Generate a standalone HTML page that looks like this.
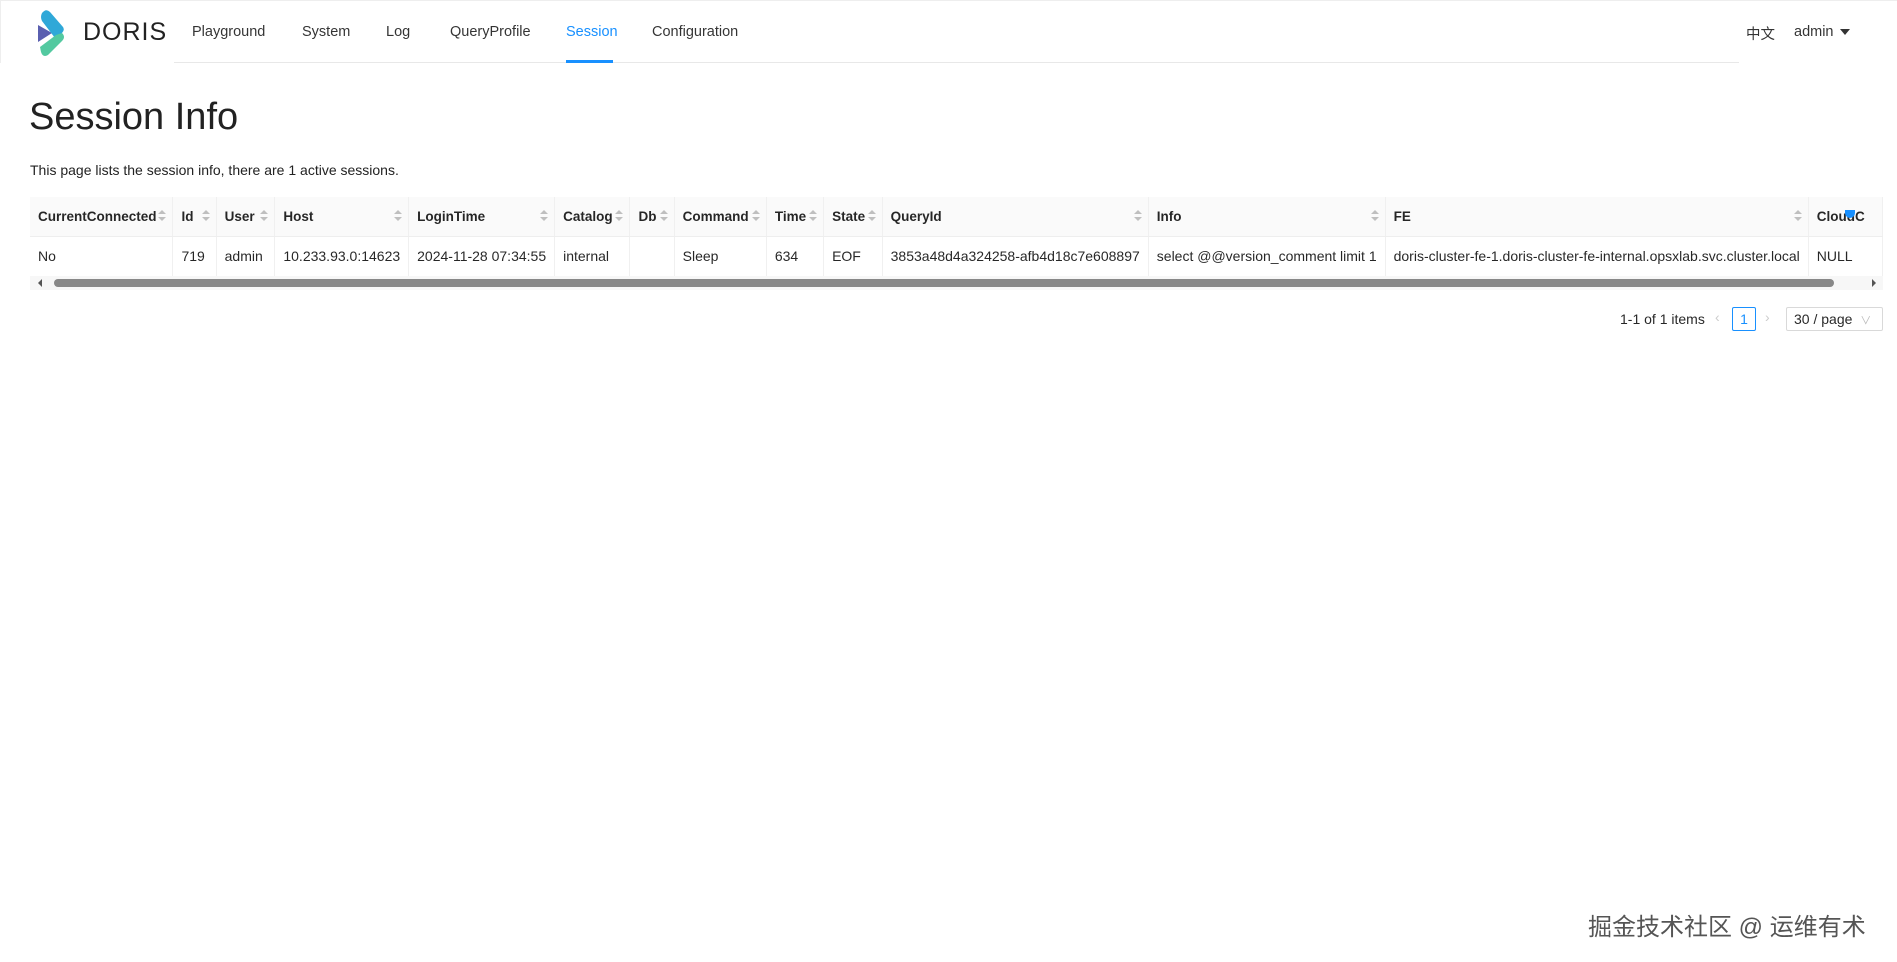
<!DOCTYPE html>
<html><head><meta charset="utf-8"><style>
*{box-sizing:border-box;margin:0;padding:0}
body{width:1897px;height:962px;background:#fff;font-family:"Liberation Sans","Noto Sans CJK SC",sans-serif;color:rgba(0,0,0,.85);position:relative;overflow:hidden;font-size:14px}
.nav{position:absolute;left:0;top:0;width:1897px;height:63px;border-top:1px solid #eee;border-left:1px solid #eee}
.nav .line{position:absolute;left:173px;top:61px;width:1565px;height:1px;background:#e8e8e8}
.nav a{position:absolute;top:23px;font-size:14.5px;color:rgba(0,0,0,.8)}
.t{position:absolute;white-space:nowrap}
table{position:absolute;left:30px;top:197px;border-collapse:collapse;table-layout:fixed}
td,th{border-right:1px solid #f0f0f0;border-bottom:1px solid #eee;padding:0 8px;text-align:left;font-size:14px;white-space:nowrap;overflow:hidden}
th{background:#fafafa;height:39px;font-weight:bold;position:relative;color:rgba(0,0,0,.85);font-size:13.5px}
td{height:40px}
.s{position:absolute;right:6px;top:13px;width:8px;height:13px}
.s:before{content:"";position:absolute;left:0;top:0;border:4px solid transparent;border-bottom:4px solid #bfbfbf;border-top:0}
.s:after{content:"";position:absolute;left:0;top:7px;border:4px solid transparent;border-top:4px solid #bfbfbf;border-bottom:0}
</style></head><body>
<div class="nav">
<svg style="position:absolute;left:33px;top:8px" width="36" height="48" viewBox="0 0 36 48">
<path d="M4 16 L18 24 L4 33 Z" fill="#5a5fb0"/>
<path d="M8 4 Q12 -1 16 3 L29 18 Q31 21 28 24 L21 29 L8 12 Q6 8 8 4Z" fill="#2fa8d8"/>
<path d="M28 24 Q32 28 28 32 L14 46 Q9 49 7 43 L6 38 L22 26Z" fill="#53c9a0"/>
</svg>
<div class="t" style="left:82px;top:17px;font-size:25px;letter-spacing:1px;color:#222">DORIS</div>
<div class="line"></div>
<a style="left:191px">Playground</a>
<a style="left:301px">System</a>
<a style="left:385px">Log</a>
<a style="left:449px">QueryProfile</a>
<a style="left:565px;color:#1890ff">Session</a>
<div style="position:absolute;left:565px;top:59px;width:47px;height:3px;background:#1890ff"></div>
<a style="left:651px">Configuration</a>
<a style="left:1745px;top:22px">中文</a>
<a style="left:1793px">admin</a>
<div style="position:absolute;left:1839px;top:28px;border:5px solid transparent;border-top:6px solid #333"></div>
</div>
<div class="t" style="left:29px;top:96px;font-size:38px;font-weight:500;color:#222">Session Info</div>
<div class="t" style="left:30px;top:162px;font-size:14px;color:#222">This page lists the session info, there are 1 active sessions.</div>
<div style="position:absolute;left:30px;top:197px;width:1853px;height:93px;overflow:hidden">
<table style="left:0;top:0">
<colgroup><col style="width:148px"><col style="width:45px"><col style="width:61px"><col style="width:127px"><col style="width:144px"><col style="width:81px"><col style="width:50px"><col style="width:98px"><col style="width:63px"><col style="width:64px"><col style="width:261px"><col style="width:234px"><col style="width:422px"><col style="width:80px"></colgroup>
<tr><th>CurrentConnected<i class="s"></i></th><th>Id<i class="s"></i></th><th>User<i class="s"></i></th><th>Host<i class="s"></i></th><th>LoginTime<i class="s"></i></th><th>Catalog<i class="s"></i></th><th>Db<i class="s"></i></th><th>Command<i class="s"></i></th><th>Time<i class="s"></i></th><th>State<i class="s"></i></th><th>QueryId<i class="s"></i></th><th>Info<i class="s"></i></th><th>FE<i class="s"></i></th><th>CloudC</th></tr>
<tr><td>No</td><td>719</td><td>admin</td><td>10.233.93.0:14623</td><td>2024-11-28 07:34:55</td><td>internal</td><td></td><td>Sleep</td><td>634</td><td>EOF</td><td>3853a48d4a324258-afb4d18c7e608897</td><td>select @@version_comment limit 1</td><td>doris-cluster-fe-1.doris-cluster-fe-internal.opsxlab.svc.cluster.local</td><td>NULL</td></tr>
</table>
<div style="position:absolute;left:0;top:79px;width:1853px;height:14px;background:#f7f7f7"></div>
<div style="position:absolute;left:24px;top:82px;width:1780px;height:8px;border-radius:4px;background:#888"></div>
<div style="position:absolute;left:8px;top:82px;border:4px solid transparent;border-right:4px solid #555;border-left:0"></div>
<div style="position:absolute;left:1842px;top:82px;border:4px solid transparent;border-left:4px solid #555;border-right:0"></div>
<div style="position:absolute;left:1815px;top:13px;width:10px;height:8px;background:#1890ff;border-radius:0 0 5px 5px"></div>
</div>
<div class="t" style="left:1620px;top:311px;font-size:14px">1-1 of 1 items</div>
<div class="t" style="left:1715px;top:309px;color:#ccc;font-size:14px">‹</div>
<div style="position:absolute;left:1732px;top:307px;width:24px;height:24px;border:1px solid #1890ff;border-radius:2px;color:#1890ff;text-align:center;line-height:22px;font-size:14px">1</div>
<div class="t" style="left:1765px;top:309px;color:#ccc;font-size:14px">›</div>
<div style="position:absolute;left:1786px;top:307px;width:97px;height:24px;border:1px solid #d9d9d9;border-radius:2px;font-size:14px;line-height:22px;padding-left:7px">30 / page <span style="color:#bbb;font-size:11px;margin-left:4px">∨</span></div>
<div class="t" style="left:1588px;top:907px;font-size:24px;color:#555">掘金技术社区 @ 运维有术</div>
</body></html>
